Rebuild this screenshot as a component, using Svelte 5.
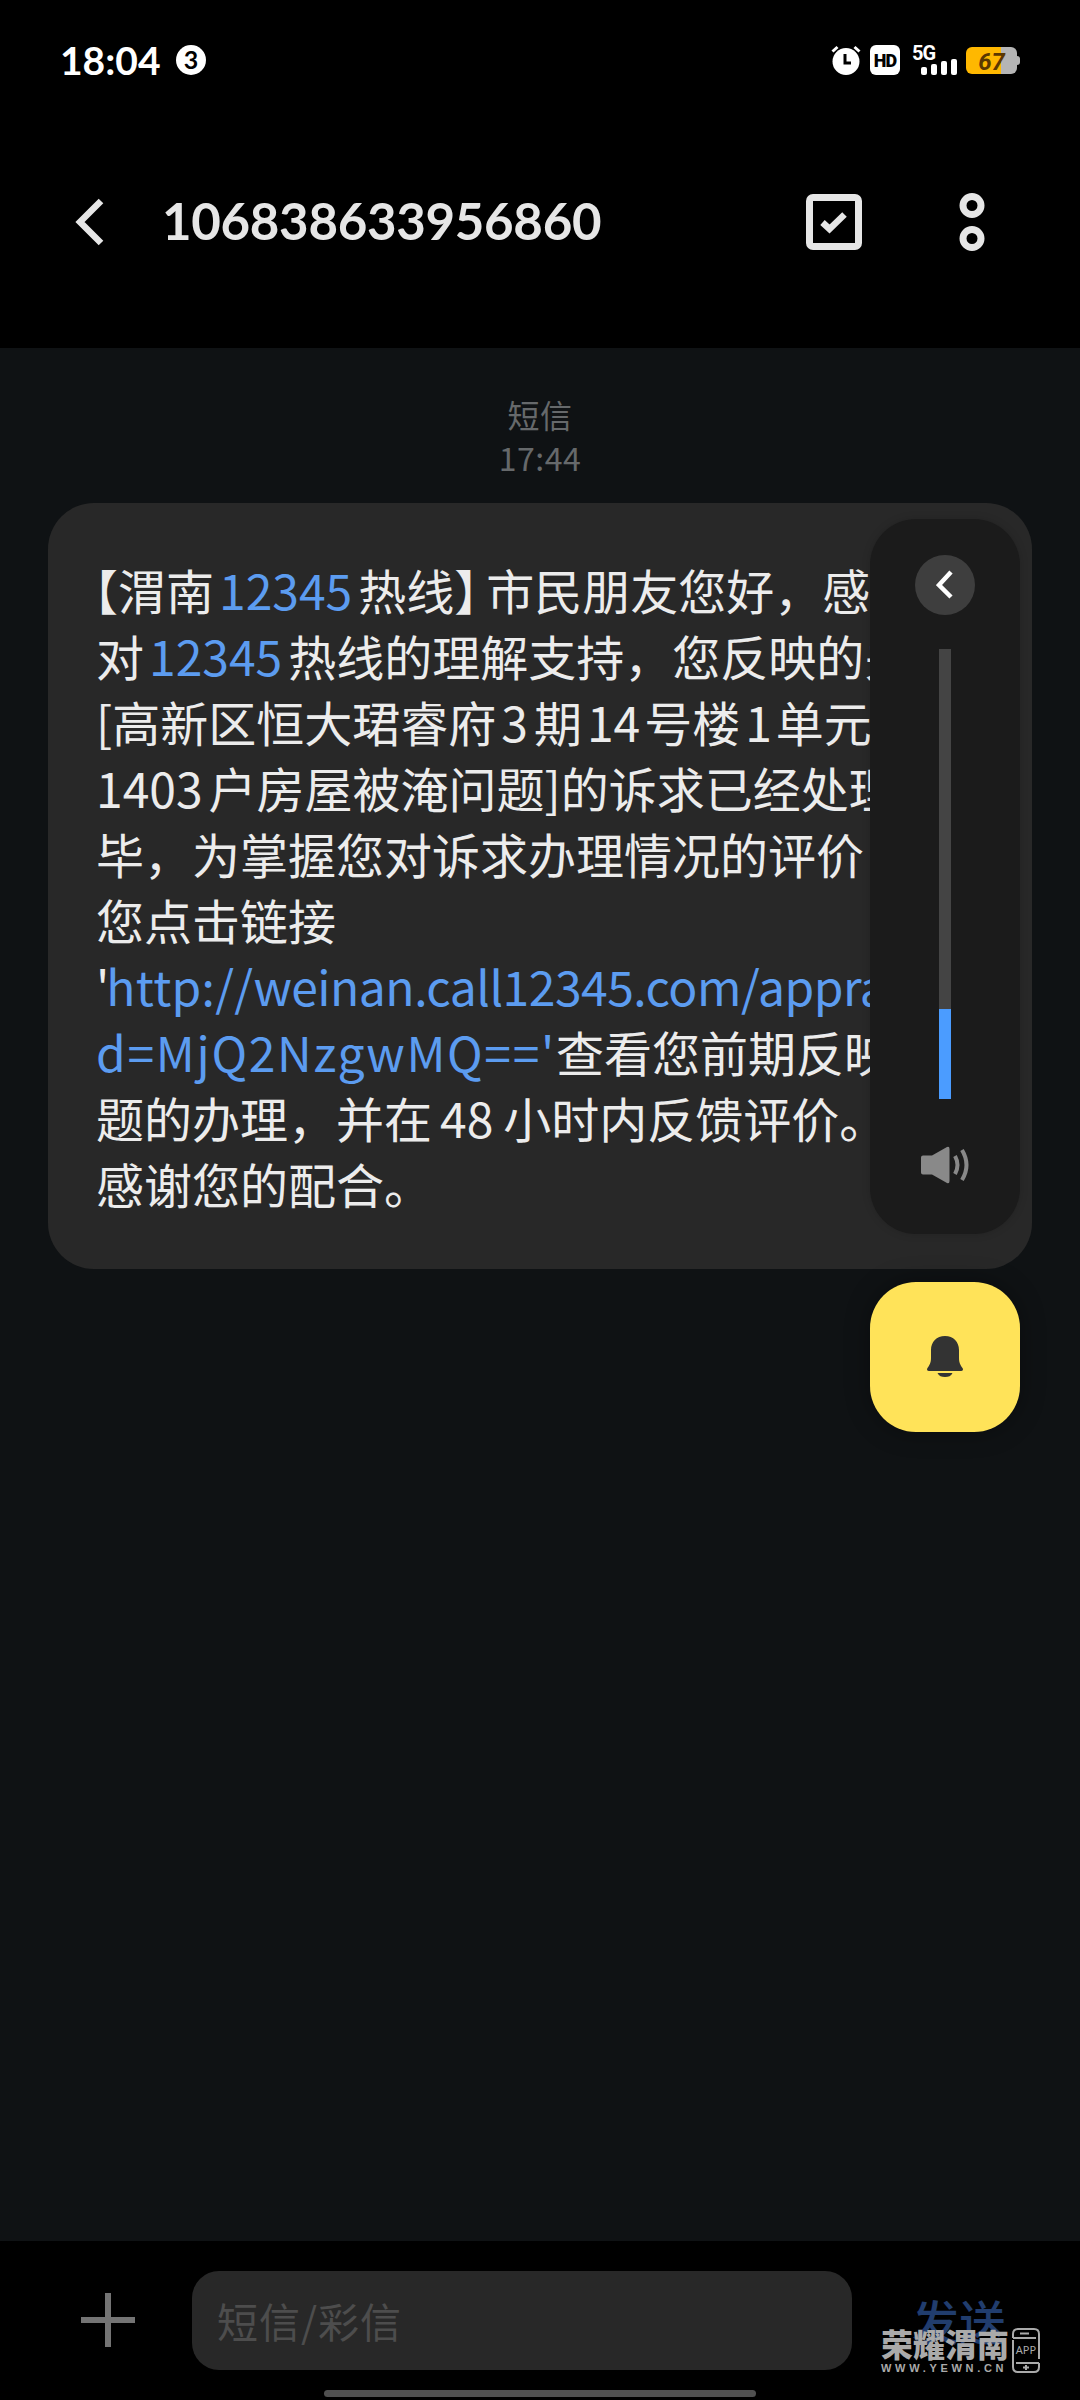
<script lang="ts">
	type Segment = { text: string; kind?: string };

	const sender = '106838633956860';
	const volume = 20;
	const signal = [8, 11, 14, 16];

	const lines: Segment[][] = [
		[
			{ text: '【', kind: 'open' },
			{ text: '渭南' },
			{ text: '12345', kind: 'num link' },
			{ text: '热线' },
			{ text: '】', kind: 'close' },
			{ text: '市民朋友您好，感' }
		],
		[
			{ text: '对' },
			{ text: '12345', kind: 'num link' },
			{ text: '热线的理解支持，您反映的关' }
		],
		[
			{ text: '[高新区恒大珺睿府' },
			{ text: '3', kind: 'num' },
			{ text: '期' },
			{ text: '14', kind: 'num narrow' },
			{ text: '号楼' },
			{ text: '1', kind: 'num narrow' },
			{ text: '单元' }
		],
		[{ text: '1403', kind: 'num first' }, { text: '户房屋被淹问题]的诉求已经处理' }],
		[{ text: '毕，为掌握您对诉求办理情况的评价' }],
		[{ text: '您点击链接' }],
		[
			{ text: "'", kind: 'quote' },
			{ text: 'http://', kind: 'link scheme' },
			{ text: 'weinan.call12345.com/appra', kind: 'link url' }
		],
		[{ text: "d=MjQ2NzgwMQ=='", kind: 'link query' }, { text: '查看您前期反映' }],
		[
			{ text: '题的办理，并在' },
			{ text: '48', kind: 'num wide' },
			{ text: '小时内反馈评价。' }
		],
		[{ text: '感谢您的配合。' }]
	];
</script>

<div class="screen">
	<header>
		<div class="status">
			<span class="clock">18:04</span>
			<span class="count">3</span>
			<div class="indicators">
				<svg class="alarm" width="30" height="30" viewBox="0 0 30 30">
					<circle cx="15" cy="16.5" r="13.5" fill="#fff" />
					<path d="M1.500 6.500l5-4.500M28.500 6.500l-5-4.500" stroke="#fff" stroke-width="3" />
					<path d="M14 9v9h6" fill="none" stroke="#000" stroke-width="3" />
				</svg>
				<span class="hd">HD</span>
				<div class="network">
					<span>5G</span>
					<div class="bars">
						{#each signal as height}
							<i style="height: {height}px"></i>
						{/each}
					</div>
				</div>
				<div class="battery"><span>67</span></div>
			</div>
		</div>
		<div class="toolbar">
			<svg class="back" width="30" height="50" viewBox="0 0 30 50">
				<path d="M27 4L6 25l21 21" fill="none" stroke="#e6e6e6" stroke-width="6.500" />
			</svg>
			<h1>{sender}</h1>
			<svg class="select" width="56" height="56" viewBox="0 0 56 56" fill="none" stroke="#e6e6e6">
				<rect x="3.500" y="3.500" width="49" height="49" rx="3.500" stroke-width="7" />
				<path d="M16.500 28.500l7 6.500 15-14.500" stroke-width="6.500" />
			</svg>
			<svg class="more" width="26" height="58" viewBox="0 0 26 58" fill="none" stroke="#e6e6e6" stroke-width="7">
				<circle cx="13" cy="12.500" r="9" />
				<circle cx="13" cy="45.500" r="9" />
			</svg>
		</div>
	</header>

	<main>
		<div class="stamp">
			<span>短信</span>
			<span>17:44</span>
		</div>
		<div class="bubble">
			{#each lines as line}
				<p>{#each line as part}<span class={part.kind}>{part.text}</span>{/each}</p>
			{/each}
		</div>

		<div class="overlay">
			<div class="volume">
				<div class="collapse">
					<svg width="18" height="30" viewBox="0 0 18 30">
						<path d="M15 2L3 15l12 12" fill="none" stroke="#fff" stroke-width="4.500" />
					</svg>
				</div>
				<div class="track"><div class="level" style="height: {volume}%"></div></div>
				<svg width="48" height="38" viewBox="0 0 48 38">
					<path d="M2 9.500h9L26 1q2.500-1 2.500 2v32q0 3-2.500 2L11 28.500H2q-2 0-2-2v-15q0-2 2-2z" fill="#898989" />
					<path d="M34 10q5 9 0 18M41 4q9 15 0 30" fill="none" stroke="#898989" stroke-width="4" />
				</svg>
			</div>
			<div class="bell">
				<svg width="38" height="42" viewBox="0 0 38 42" fill="#333">
					<path d="M19 0C10.500 0 5 6 5 14v8c0 5-1.500 7-3.500 10-1 1.500-.5 3 1.500 3h32c2 0 2.500-1.500 1.500-3-2-3-3.500-5-3.500-10v-8C33 6 27.500 0 19 0z" />
					<path d="M11.500 37h15c-1.500 3-4 4-7.500 4s-6-1-7.500-4z" />
				</svg>
			</div>
		</div>
	</main>

	<footer>
		<svg class="plus" width="54" height="54" viewBox="0 0 54 54">
			<path d="M27 0v54M0 27h54" stroke="#747474" stroke-width="6" />
		</svg>
		<div class="field">短信/彩信</div>
		<div class="send">发送</div>
		<div class="home"></div>
		<div class="watermark">
			<div class="brand">
				<strong>荣耀渭南</strong>
				<small>WWW.YEWN.CN</small>
			</div>
			<svg width="28" height="45" viewBox="0 0 28 45" fill="none" stroke="#aaa" stroke-width="2">
				<path d="M1 10V6q0-5 5-5h16q5 0 5 5v25M1 12v27q0 5 5 5h16q5 0 5-5v-4M1 10h23M4 35h23" />
				<path d="M8 5.500h9" />
				<path d="M14 37v5M11 39.500h6" />
				<text x="14" y="26" text-anchor="middle" fill="#aaa" stroke="none">APP</text>
			</svg>
		</div>
	</footer>
</div>

<style>
	:global(body) {
		background: #000;
	}

	.screen {
		display: flex;
		flex-direction: column;
		width: 1080px;
		height: 2400px;
		overflow: hidden;
		background: #0f1214;
		color: #ececec;
		font-family: 'Noto Sans CJK SC', 'Noto Sans', sans-serif;
	}

	header {
		height: 348px;
		background: #000;
	}

	.status {
		display: flex;
		align-items: center;
		height: 120px;
		padding: 0 60px;
		color: #fff;
	}

	.clock {
		width: 116px;
		font-family: Lato, sans-serif;
		font-size: 39px;
		font-weight: 700;
		line-height: 120px;
	}

	.count {
		width: 30px;
		height: 30px;
		border-radius: 50%;
		background: #fff;
		color: #000;
		font: 700 25px/29px Lato, sans-serif;
		text-align: center;
	}

	.indicators {
		display: flex;
		align-items: center;
		margin-left: auto;
	}

	.hd {
		width: 30px;
		height: 30px;
		margin-left: 9px;
		border-radius: 6px;
		background: #fff;
		color: #000;
		font: 900 18px/31px Roboto, sans-serif;
		letter-spacing: -1px;
		text-align: center;
	}

	.network {
		width: 45px;
		height: 30px;
		margin: 0 9px 0 12px;
	}

	.network span {
		display: block;
		height: 14px;
		font: 700 20px/16px Roboto, sans-serif;
		letter-spacing: -1px;
	}

	.bars {
		display: flex;
		align-items: flex-end;
		gap: 4px;
		height: 16px;
		padding-left: 9px;
	}

	.bars i {
		width: 6px;
		border-radius: 2px;
		background: #fff;
	}

	.battery {
		position: relative;
		width: 51px;
		height: 27px;
		margin-right: 3px;
		border-radius: 6px;
		background: linear-gradient(90deg, #ffb800 68%, #b5b5b5 68%);
		color: #5b3800;
		font: italic 700 24px/30px Roboto, sans-serif;
		text-align: center;
	}

	.battery::after {
		content: '';
		position: absolute;
		top: 9px;
		right: -3px;
		width: 3px;
		height: 9px;
		border-radius: 0 3px 3px 0;
		background: #b5b5b5;
	}

	.toolbar {
		display: flex;
		align-items: center;
		height: 204px;
		padding: 0 95px 0 74px;
	}

	h1 {
		margin: 0 0 3px 58px;
		color: #e6e6e6;
		font-family: Lato, sans-serif;
		font-size: 51px;
		font-weight: 700;
		letter-spacing: -0.3px;
		line-height: 70px;
	}

	.select {
		margin-left: auto;
	}

	.more {
		margin-left: 97px;
	}

	main {
		position: relative;
		flex: 1;
	}

	.stamp {
		display: flex;
		flex-direction: column;
		align-items: center;
		height: 155px;
		padding-top: 45px;
		box-sizing: border-box;
		color: #66696b;
		font-size: 32px;
		letter-spacing: 0.5px;
		line-height: 43px;
	}

	.bubble {
		height: 766px;
		margin: 0 48px;
		padding: 53px 48px 0 48px;
		box-sizing: border-box;
		border-radius: 46px;
		background: #282828;
		font-size: 48px;
		line-height: 66px;
		overflow: hidden;
	}

	p {
		margin: 0;
		white-space: nowrap;
	}

	.link {
		color: #5c9cf0;
	}

	.num {
		margin: 0 6px 0 5px;
	}

	.narrow {
		margin: 0 4px 0 5px;
	}

	.wide {
		margin: 0 10px 0 8px;
	}

	.first {
		margin-left: 0;
	}

	/* half-width brackets */
	.open,
	.close {
		font-feature-settings: 'halt';
	}

	.open {
		margin-left: -2px;
	}

	.close {
		margin-right: 8px;
	}

	.quote {
		margin-right: -3px;
	}

	.scheme {
		letter-spacing: 0.3px;
	}

	.url {
		letter-spacing: -0.5px;
	}

	.query {
		letter-spacing: 1.700px;
	}

	/* volume panel floats above the conversation */
	.overlay {
		position: absolute;
		top: 171px;
		right: 60px;
		width: 150px;
	}

	.volume {
		display: flex;
		flex-direction: column;
		align-items: center;
		height: 715px;
		padding-top: 36px;
		box-sizing: border-box;
		border-radius: 46px;
		background: #1b1b1b;
		box-shadow: 0 0 8px rgba(0, 0, 0, 0.15);
	}

	.collapse {
		display: grid;
		place-items: center;
		width: 60px;
		height: 60px;
		border-radius: 50%;
		background: #3e3e3e;
	}

	.track {
		display: flex;
		align-items: flex-end;
		width: 12px;
		height: 450px;
		margin: 34px 0 47px;
		background: #444;
	}

	.level {
		width: 100%;
		background: #4b9cff;
	}

	.bell {
		display: grid;
		place-items: center;
		height: 150px;
		margin-top: 48px;
		border-radius: 46px;
		background: #ffe359;
		box-shadow: 0 0 24px rgba(0, 0, 0, 0.35);
	}

	footer {
		position: relative;
		display: flex;
		height: 159px;
		padding: 30px 0 0 81px;
		box-sizing: border-box;
		background: #000;
	}

	.plus {
		margin-top: 22px;
	}

	.field {
		width: 660px;
		height: 99px;
		margin-left: 57px;
		padding-left: 25px;
		box-sizing: border-box;
		border-radius: 27px;
		background: #282828;
		color: #4d4d4d;
		font-size: 41px;
		letter-spacing: 1px;
		line-height: 99px;
	}

	.send {
		margin-left: 60px;
		color: #213d6e;
		font-size: 47px;
		font-weight: 500;
		line-height: 98px;
	}

	.home {
		position: absolute;
		left: 324px;
		bottom: 3px;
		width: 432px;
		height: 7px;
		border-radius: 4px;
		background: #505050;
	}

	.watermark {
		position: absolute;
		top: 87px;
		left: 881px;
		display: flex;
		gap: 4px;
		color: #aaa;
	}

	.brand {
		width: 127px;
	}

	strong {
		display: block;
		height: 34px;
		font-size: 32px;
		font-weight: 900;
		line-height: 30px;
		white-space: nowrap;
	}

	small {
		display: block;
		font: 700 11px/12px 'Liberation Sans', sans-serif;
		letter-spacing: 3.700px;
		white-space: nowrap;
	}

	text {
		font: 11px 'Noto Sans', sans-serif;
	}
</style>
